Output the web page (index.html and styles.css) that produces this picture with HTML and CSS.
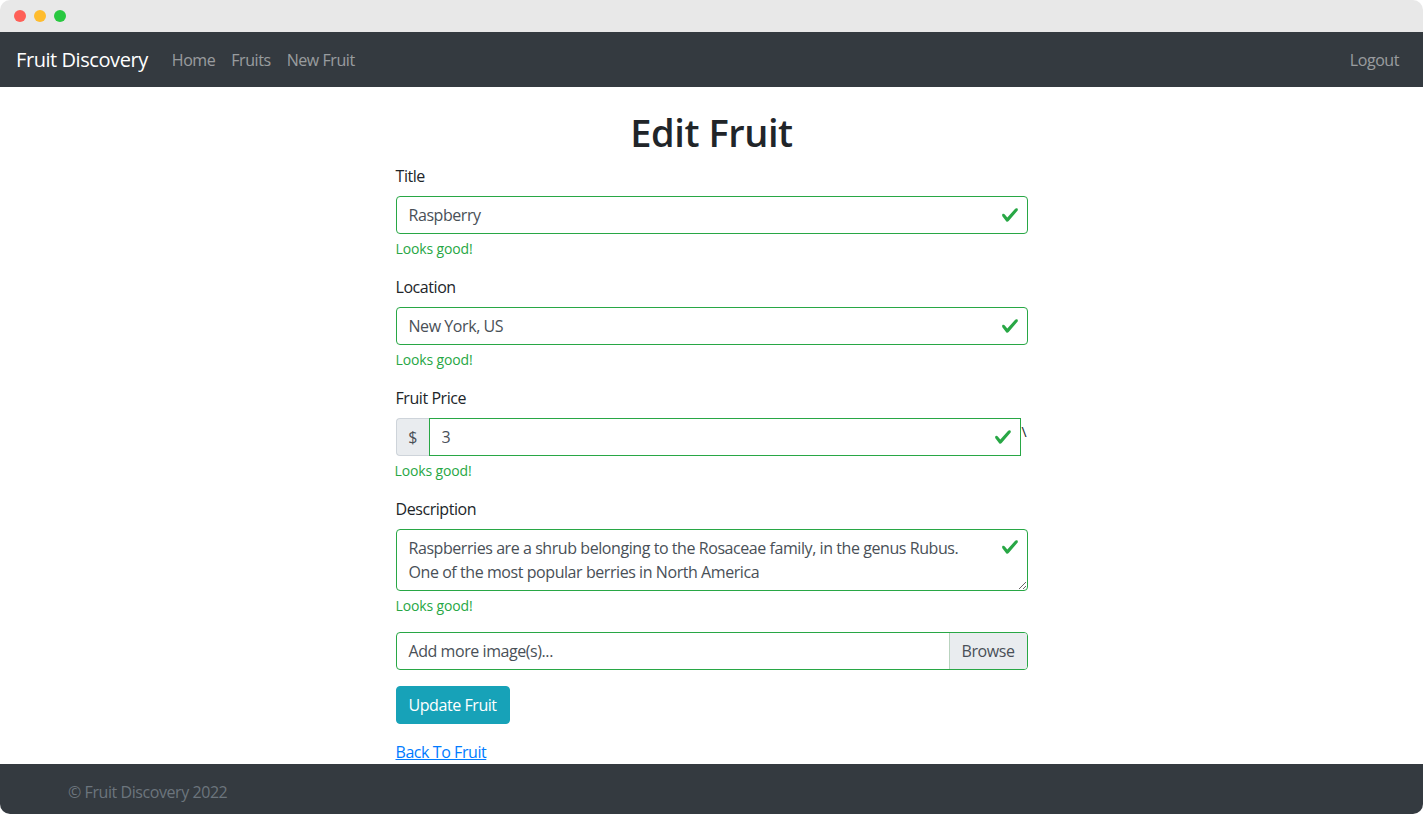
FILE: index.html
```html
<!DOCTYPE html>
<html lang="en">
<head>
<meta charset="utf-8">
<title>Edit Fruit</title>
<link rel="stylesheet" href="styles.css">
</head>
<body>
<div class="window">
  <div class="titlebar">
    <span class="dot red"></span><span class="dot yellow"></span><span class="dot green"></span>
  </div>
  <nav class="navbar">
    <a class="brand" href="#">Fruit Discovery</a>
    <div class="nav-links">
      <a href="#">Home</a>
      <a href="#">Fruits</a>
      <a href="#">New Fruit</a>
    </div>
    <div class="nav-right"><a href="#">Logout</a></div>
  </nav>
  <main class="main">
    <h1 class="title">Edit Fruit</h1>
    <form class="form">
      <div class="group">
        <label class="label">Title</label>
        <div class="field">
          <input class="control" type="text" value="Raspberry">
          <svg class="check" viewBox="0 0 8 8"><path d="M2.3 6.73L.6 4.53c-.4-1.04.46-1.4 1.1-.8l1.1 1.4 3.4-3.8c.6-.63 1.6-.27 1.2.7l-4 4.6c-.43.5-.8.4-1.1.1z"/></svg>
        </div>
        <div class="feedback">Looks good!</div>
      </div>
      <div class="group">
        <label class="label">Location</label>
        <div class="field">
          <input class="control" type="text" value="New York, US">
          <svg class="check" viewBox="0 0 8 8"><path d="M2.3 6.73L.6 4.53c-.4-1.04.46-1.4 1.1-.8l1.1 1.4 3.4-3.8c.6-.63 1.6-.27 1.2.7l-4 4.6c-.43.5-.8.4-1.1.1z"/></svg>
        </div>
        <div class="feedback">Looks good!</div>
      </div>
      <div class="group">
        <label class="label">Fruit Price</label>
        <div class="input-group">
          <span class="prepend">$</span>
          <div class="field grow">
            <input class="control square" type="text" value="3">
            <svg class="check" viewBox="0 0 8 8"><path d="M2.3 6.73L.6 4.53c-.4-1.04.46-1.4 1.1-.8l1.1 1.4 3.4-3.8c.6-.63 1.6-.27 1.2.7l-4 4.6c-.43.5-.8.4-1.1.1z"/></svg>
          </div>
          <span class="stray">\</span>
        </div>
        <div class="feedback shift">Looks good!</div>
      </div>
      <div class="group">
        <label class="label">Description</label>
        <div class="field">
          <textarea class="control area" rows="2">Raspberries are a shrub belonging to the Rosaceae family, in the genus Rubus.
One of the most popular berries in North America</textarea>
          <svg class="check top" viewBox="0 0 8 8"><path d="M2.3 6.73L.6 4.53c-.4-1.04.46-1.4 1.1-.8l1.1 1.4 3.4-3.8c.6-.63 1.6-.27 1.2.7l-4 4.6c-.43.5-.8.4-1.1.1z"/></svg>
        </div>
        <div class="feedback">Looks good!</div>
      </div>
      <div class="group">
        <div class="file">
          <span class="file-label">Add more image(s)...</span>
          <span class="file-btn">Browse</span>
        </div>
      </div>
      <button class="btn" type="button">Update Fruit</button>
    </form>
    <a class="back" href="#">Back To Fruit</a>
  </main>
  <footer class="footer">
    <span class="copy">© Fruit Discovery 2022</span>
  </footer>
</div>
</body>
</html>
```

FILE: styles.css
```css
* { box-sizing: border-box; }
html, body { margin: 0; padding: 0; background: #ffffff; }
body {
  font-family: "Open Sans", "Noto Sans", "Liberation Sans", sans-serif;
  font-size: 16px;
  line-height: 1.5;
  letter-spacing: -0.027em;
  color: #212529;
}
.window {
  width: 1423px;
  height: 814px;
  overflow: hidden;
  border-radius: 10px;
  background: #ffffff;
  display: flex;
  flex-direction: column;
}
.titlebar {
  height: 32px;
  flex: none;
  background: #e8e8e8;
  display: flex;
  align-items: center;
  padding-left: 14px;
  gap: 8px;
}
.dot { width: 12px; height: 12px; border-radius: 50%; display: block; }
.red { background: #fe5f57; }
.yellow { background: #febc2e; }
.green { background: #28c840; }

.navbar {
  height: 55px;
  flex: none;
  background: #343a40;
  display: flex;
  align-items: center;
  padding: 0 16px;
}
.brand {
  color: #ffffff;
  font-size: 20px;
  text-decoration: none;
  margin-right: 16px;
  line-height: 30px;
}
.nav-links { display: flex; }
.nav-links a, .nav-right a {
  color: rgba(255, 255, 255, 0.5);
  text-decoration: none;
  padding: 8px;
}
.nav-right { margin-left: auto; }

.main {
  flex: none;
  width: 632px;
  margin: 21px auto 0;
}
.title {
  margin: 0 0 8px;
  font-size: 38px;
  line-height: 48px;
  font-weight: 600;
  text-align: center;
}
.form { margin: 0; }
.group { margin-bottom: 16px; }
.label { display: block; margin-bottom: 8px; }
.field { position: relative; }
.field.grow { flex: 1; }
.control {
  display: block;
  width: 100%;
  height: 38px;
  padding: 6px 36px 6px 12px;
  font: inherit;
  letter-spacing: inherit;
  color: #495057;
  background: #ffffff;
  border: 1px solid #28a745;
  border-radius: 4px;
  outline: none;
}
.control.square { border-radius: 0; }
.control.area {
  height: 62px;
  resize: vertical;
  line-height: 24px;
  white-space: pre-wrap;
}
.check {
  position: absolute;
  right: 9px;
  top: 10px;
  width: 18px;
  height: 18px;
  fill: #28a745;
}
.check.top { top: 9px; }
.feedback {
  margin-top: 5px;
  font-size: 14px;
  line-height: 20px;
  letter-spacing: -0.01em;
  color: #28a745;
}
.feedback.shift { margin-left: -1px; }
.input-group { display: flex; align-items: stretch; }
.prepend {
  width: 33px;
  flex: none;
  display: flex;
  align-items: center;
  justify-content: center;
  background: #e9ecef;
  color: #495057;
  border: 1px solid #ced4da;
  border-right: 0;
  border-radius: 4px 0 0 4px;
}
.stray {
  flex: none;
  width: 7px;
  padding-left: 1px;
  line-height: 28px;
  font-size: 14px;
  color: #212529;
}
.file {
  display: flex;
  height: 38px;
  border: 1px solid #28a745;
  border-radius: 4px;
  overflow: hidden;
}
.file-label {
  flex: 1;
  padding: 6px 12px;
  color: #495057;
}
.file-btn {
  padding: 6px 12px;
  background: #e9ecef;
  color: #495057;
  border-left: 1px solid #b9d3bf;
}
.btn {
  display: block;
  height: 38px;
  padding: 6px 12px;
  font: inherit;
  letter-spacing: inherit;
  color: #ffffff;
  background: #17a2b8;
  border: 1px solid #17a2b8;
  border-radius: 4px;
}
.back {
  display: inline-block;
  margin-top: 16px;
  color: #007bff;
  text-decoration: underline;
}
.footer {
  flex: none;
  height: 56px;
  background: #343a40;
  padding: 16px 68px;
}
.copy { color: #6c757d; }
```
